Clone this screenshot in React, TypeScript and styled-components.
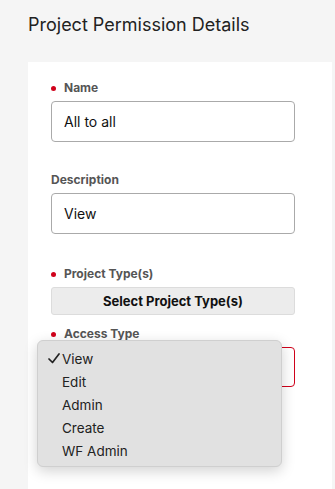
import { createGlobalStyle, styled, css } from "styled-components";

const GlobalStyle = createGlobalStyle`
  html, body {
    margin: 0;
    padding: 0;
    background: #f5f5f5;
    font-family: Inter, "Noto Sans", Arial, sans-serif;
    color: #222;
  }
`;

const Page = styled.div`
  min-height: 100vh;
  display: flex;
  flex-direction: column;
  padding-top: 13px;
  box-sizing: border-box;
`;

const Title = styled.h1`
  margin: 0 0 25px 28px;
  font-size: 18px;
  line-height: 24px;
  font-weight: 400;
  color: #222;
`;

const Panel = styled.div`
  flex: 1;
  margin-left: 28px;
  width: 304px;
  background: #fff;
  padding: 18px 0 0 23px;
  box-sizing: border-box;
  display: flex;
  flex-direction: column;
`;

const Field = styled.div<{ $gap?: number }>`
  ${({ $gap = 0 }) => css`
    display: flex;
    flex-direction: column;
    gap: 5px;
    margin-top: ${$gap}px;
    position: relative;
    width: 244px;
  `}
`;

const Label = styled.label<{ $required?: boolean }>`
  ${({ $required }) => css`
    display: flex;
    align-items: center;
    gap: 8px;
    font-size: 12px;
    line-height: 16px;
    font-weight: 700;
    color: #555;

    &::before {
      content: "";
      display: ${$required ? "block" : "none"};
      width: 5px;
      height: 5px;
      border-radius: 50%;
      background: #d0021b;
    }
  `}
`;

const TextInput = styled.div<{ $invalid?: boolean; $height?: number }>`
  ${({ $invalid, $height = 41 }) => css`
    height: ${$height}px;
    box-sizing: border-box;
    border: 1px solid ${$invalid ? "#d0021b" : "#aaa"};
    border-radius: 4px;
    padding: 0 12px;
    display: flex;
    align-items: center;
    font-size: 14px;
    color: #111;
    background: #fff;
  `}
`;

const SelectButton = styled.button`
  height: 28px;
  width: 100%;
  border: 1px solid #dcdcdc;
  border-radius: 3px;
  background: #ececec;
  font-family: inherit;
  font-size: 13px;
  font-weight: 700;
  color: #111;
  cursor: pointer;
`;

const Menu = styled.ul`
  position: absolute;
  left: -14px;
  top: 14px;
  width: 245px;
  margin: 0;
  padding: 6px 0 4px;
  list-style: none;
  box-sizing: border-box;
  background: #e1e1e1;
  border: 1px solid #cfcfcf;
  border-radius: 6px;
  box-shadow: 0 4px 14px rgba(0, 0, 0, 0.18);
`;

const MenuItem = styled.li`
  position: relative;
  height: 23px;
  display: flex;
  align-items: center;
  padding-left: 24px;
  font-size: 13.5px;
  color: #222;
`;

const Check = styled.svg`
  position: absolute;
  left: 10px;
  top: 6px;
`;

const options = ["View", "Edit", "Admin", "Create", "WF Admin"];

export default function App() {
  return (
    <Page>
      <GlobalStyle />
      <Title>Project Permission Details</Title>
      <Panel>
        <Field>
          <Label $required>Name</Label>
          <TextInput>All to all</TextInput>
        </Field>
        <Field $gap={30}>
          <Label>Description</Label>
          <TextInput>View</TextInput>
        </Field>
        <Field $gap={32}>
          <Label $required>Project Type(s)</Label>
          <SelectButton>Select Project Type(s)</SelectButton>
        </Field>
        <Field $gap={11}>
          <Label $required>Access Type</Label>
          <TextInput $invalid $height={40} />
          <Menu>
            {options.map((o, i) => (
              <MenuItem key={o}>
                {i === 0 && (
                  <Check width="12" height="11" viewBox="0 0 12 11">
                    <path d="M1 6 L4.5 9.5 L11 1" fill="none" stroke="#222" strokeWidth="1.7" strokeLinecap="round" strokeLinejoin="round" />
                  </Check>
                )}
                {o}
              </MenuItem>
            ))}
          </Menu>
        </Field>
      </Panel>
    </Page>
  );
}
